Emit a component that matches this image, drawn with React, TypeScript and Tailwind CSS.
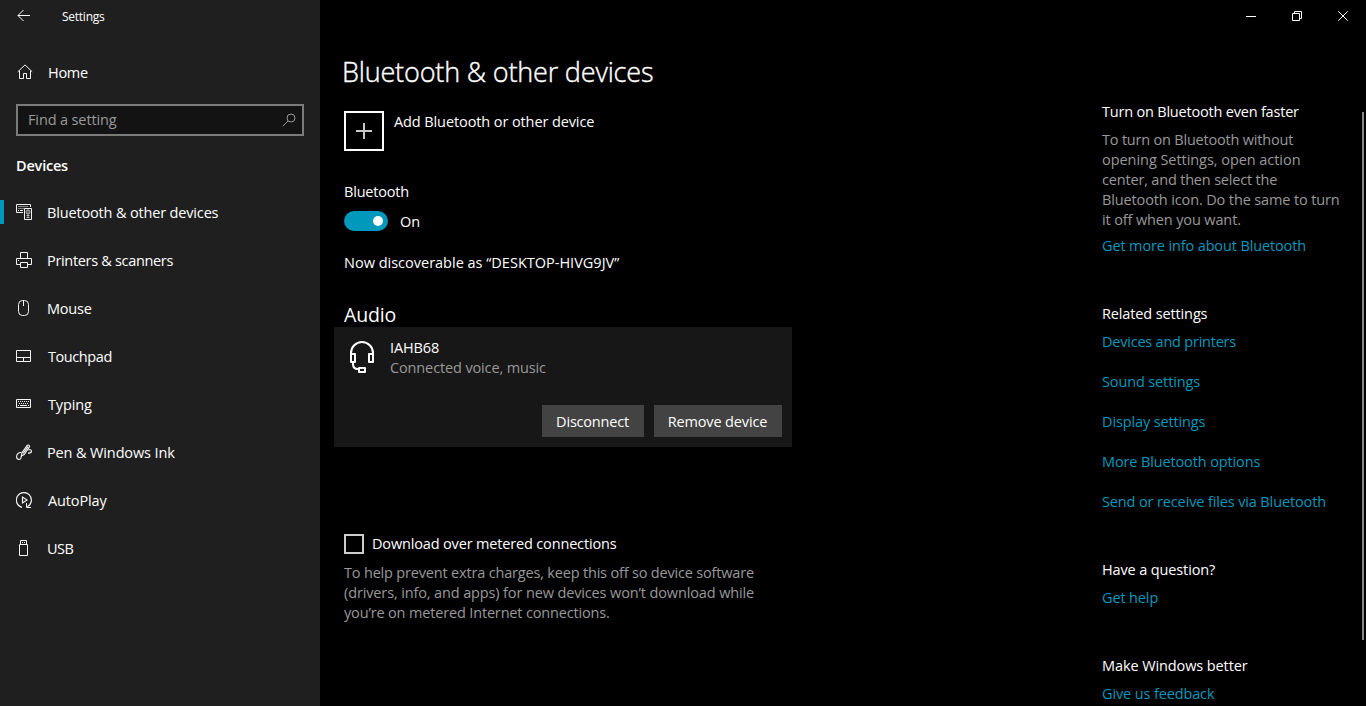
import type { ReactNode } from "react";

function Glyph({ children, className = "" }: { children: ReactNode; className?: string }) {
  return (
    <svg width="16" height="16" viewBox="0 0 16 16" fill="none" stroke="#f4f4f4" className={"shrink-0 " + className}>
      {children}
    </svg>
  );
}

const bluetoothIcon = (
  <Glyph>
    <path d="M7 8.5H.5v-8h14V3" />
    <path d="M2.5 2.5h10M2.5 4.5h5" strokeDasharray="1 1" />
    <path d="M2 6.5h1M4 6.5h3" />
    <path d="M8.5 4.5h7v11h-7z" />
    <circle cx="12" cy="8" r="2" stroke="#bdbdbd" />
    <path d="M12 5.5v8" stroke="#a0a0a0" />
    <path d="M10.5 11.5h3M10.5 13.5h3" stroke="#bdbdbd" />
  </Glyph>
);
const printerIcon = (
  <Glyph>
    <path d="M4.5 6V.5h7V6M4 12.5H.5v-6h15v6H12M4.5 10.5h7v5h-7zM2 8.5h1" />
  </Glyph>
);
const mouseIcon = (
  <Glyph>
    <rect x="2.5" y=".5" width="10" height="15" rx="4" />
    <path d="M7.5 1v5" />
  </Glyph>
);
const touchpadIcon = (
  <Glyph>
    <path d="M.5 2.5h14v11H.5zM.5 9.5h14M7.5 10v3" />
  </Glyph>
);
const typingIcon = (
  <Glyph>
    <path d="M.5 3.5h14v8H.5z" />
    <path d="M2 5.5h11M3 7.5h10" strokeDasharray="1 1" />
    <path d="M2 9.5h1M4 9.5h7M12 9.5h1" />
  </Glyph>
);
const penIcon = (
  <Glyph>
    <path d="M5.3 12 6 8.8 11 1.6C12 .3 14.2 1.3 13.4 3L8.2 10.6 5.3 12zM7.2 9.4l5-7" strokeWidth="1.1" />
    <path
      d="M5.5 8.3C2.5 8.6.6 10.6.6 12.8c0 1.6 1 2.6 2.2 2.6 1.9 0 2.500-1.600 2.600-3.700M12.300 5.900c2-.8 3.400.2 3.100 1.600-.3 1.200-1.600 1.600-3.400 1.600"
      strokeWidth="1.1"
    />
  </Glyph>
);
const autoplayIcon = (
  <Glyph>
    <path d="M6 15.3A7.5 7.5 0 1 1 11.3 14.7" strokeWidth="1.2" />
    <path d="M10.5 11v4.5H15" />
    <path d="M6.5 5v6l4.5-3z" strokeWidth="1.2" />
  </Glyph>
);
const usbIcon = (
  <Glyph>
    <path d="M3.5 4.5h8v11h-8zM4.5 4V.5h6V4M6 2.5h1M8 2.5h1" />
  </Glyph>
);

const nav = [
  { label: "Bluetooth & other devices", icon: bluetoothIcon, cls: "pl-[15px] tracking-[-0.16px]" },
  { label: "Printers & scanners", icon: printerIcon, cls: "pl-[15px] tracking-[-0.32px]" },
  { label: "Mouse", icon: mouseIcon, cls: "pl-[15px] tracking-[-0.2px]" },
  { label: "Touchpad", icon: touchpadIcon, cls: "pl-4 tracking-[-0.42px]" },
  { label: "Typing", icon: typingIcon, cls: "pl-4" },
  { label: "Pen & Windows Ink", icon: penIcon, cls: "pl-[15px] tracking-[-0.13px]" },
  { label: "AutoPlay", icon: autoplayIcon, cls: "pl-4" },
  { label: "USB", icon: usbIcon, cls: "pl-[15px] tracking-[-0.5px]" },
];

function Sidebar() {
  return (
    <aside className="flex w-[320px] shrink-0 flex-col bg-[#1f1f1f]">
      <div className="flex h-8 items-center pl-[17px]">
        <svg width="14" height="14" viewBox="0 0 14 14" fill="none" stroke="#fff">
          <path d="M1 6.5h12M6.5 1 1 6.5 6.5 12" />
        </svg>
        <span className="pt-[2px] pl-[31px] text-[12px] leading-4 tracking-[-0.25px]">Settings</span>
      </div>
      <div className="mt-4 flex h-12 items-center pl-[17px]">
        <Glyph>
          <path d="M.8 7.8 8 .9l7.2 6.9M2.5 6.5v8h4v-5h3v5h4v-8" />
        </Glyph>
        <span className="pt-[2px] pl-[15px] tracking-[-0.3px]">Home</span>
      </div>
      <div className="mx-4 mt-2 flex h-8 items-center justify-between border-2 border-[#7a7a7a] bg-[#131313] pr-[6px] pl-[10px] text-[#999]">
        <span>Find a setting</span>
        <svg width="14" height="14" viewBox="0 0 14 14" fill="none" stroke="#999">
          <circle cx="9" cy="5" r="4" />
          <path d="M6 8 .8 13.2" />
        </svg>
      </div>
      <h2 className="mt-5 pl-4 font-semibold tracking-[-0.2px]">Devices</h2>
      <nav className="mt-3 flex flex-col">
        {nav.map((n, i) => (
          <div key={n.label} className="flex h-12 items-center">
            <span className={i === 0 ? "h-6 w-1 bg-[#0099bc]" : "h-6 w-1"} />
            <span className="w-3" />
            {n.icon}
            <span className={"pt-[2px] " + n.cls}>{n.label}</span>
          </div>
        ))}
      </nav>
    </aside>
  );
}

function WindowButtons() {
  return (
    <div className="flex h-8 justify-end">
      {["M0 5.5h10", "M.5 2.5h7v7h-7zM2.5 2V.5h7v7H8", "M.3.3l9.4 9.4M9.7.3.3 9.7"].map((d) => (
        <div key={d} className="flex w-[46px] items-center justify-center">
          <svg width="10" height="10" viewBox="0 0 10 10" fill="none" stroke="#fff">
            <path d={d} />
          </svg>
        </div>
      ))}
    </div>
  );
}

function Devices() {
  return (
    <section className="flex w-[458px] flex-col">
      <h1 className="mt-[21px] pl-2 text-[27px] leading-[38px] font-light tracking-[-0.17px] [-webkit-text-stroke:0.4px_white]">
        Bluetooth &amp; other devices
      </h1>
      <div className="mt-5 flex pl-[10px]">
        <div className="flex size-10 items-center justify-center border-2 border-white">
          <svg width="16" height="16" viewBox="0 0 16 16" stroke="#c8c8c8" strokeWidth="2">
            <path d="M0 8h16M8 0v16" />
          </svg>
        </div>
        <span className="pt-px pl-[10px] tracking-[-0.1px]">Add Bluetooth or other device</span>
      </div>
      <div className="mt-[31px] pl-[10px] tracking-[-0.2px]">Bluetooth</div>
      <div className="mt-[9px] flex h-5 items-center pl-[10px]">
        <div className="flex h-5 w-11 items-center justify-end rounded-full bg-[#0099bc] pr-[5px]">
          <span className="size-[10px] rounded-full bg-white" />
        </div>
        <span className="pt-[2px] pl-3 tracking-normal">On</span>
      </div>
      <div className="mt-[22px] pl-[10px] tracking-normal">Now discoverable as “DESKTOP-HIVG9JV”</div>
      <h2 className="mt-[30px] pl-[10px] text-[19.5px] leading-6">Audio</h2>
      <div className="flex h-[120px] flex-col justify-between bg-[#171717] p-[10px]">
        <div className="flex">
          <svg
            width="24"
            height="32"
            viewBox="0 0 24 32"
            fill="none"
            stroke="#fff"
            strokeWidth="2"
            strokeLinejoin="round"
            className="mt-1 ml-[6px]"
          >
            <path d="M1 21V12a11 11 0 0 1 22 0v9M1 13h4v8H1zM19 13h4v8h-4zM3 21v2c0 3.5 2 5 5 5M9 27h6v4H9z" />
          </svg>
          <div className="flex flex-col pt-px pl-4">
            <span>IAHB68</span>
            <span className="text-[#999]">Connected voice, music</span>
          </div>
        </div>
        <div className="flex justify-end gap-[10px]">
          <button className="h-8 w-[102px] bg-[#434343] pt-[2px] pr-px tracking-[-0.2px]">Disconnect</button>
          <button className="h-8 w-32 bg-[#434343] pt-[2px] pr-px">Remove device</button>
        </div>
      </div>
      <div className="mt-[87px] flex items-center pl-[10px]">
        <span className="size-5 border-2 border-[#ccc]" />
        <span className="pl-2 tracking-[-0.16px]">Download over metered connections</span>
      </div>
      <p className="mt-[9px] pl-[10px] whitespace-nowrap text-[#999]">
        <span className="tracking-[-0.18px]">To help prevent extra charges, keep this off so device software</span>
        <br />
        <span className="tracking-[-0.13px]">(drivers, info, and apps) for new devices won’t download while</span>
        <br />
        <span className="tracking-[-0.16px]">you’re on metered Internet connections.</span>
      </p>
    </section>
  );
}

function Help() {
  return (
    <section className="mt-[70px] flex w-[260px] flex-col whitespace-nowrap">
      <div className="tracking-[-0.2px]">Turn on Bluetooth even faster</div>
      <p className="mt-2 text-[#999]">
        <span className="tracking-[-0.2px]">To turn on Bluetooth without</span>
        <br />
        <span className="tracking-[-0.05px]">opening Settings, open action</span>
        <br />
        <span className="tracking-[-0.18px]">center, and then select the</span>
        <br />
        Bluetooth icon. Do the same to turn
        <br />
        it off when you want.
      </p>
      <a className="mt-[6px] text-[#0099bc]">Get more info about Bluetooth</a>
      <div className="mt-12">Related settings</div>
      <div className="mt-2 flex flex-col gap-5 text-[#0099bc]">
        <a className="tracking-[-0.22px]">Devices and printers</a>
        <a>Sound settings</a>
        <a>Display settings</a>
        <a>More Bluetooth options</a>
        <a>Send or receive files via Bluetooth</a>
      </div>
      <div className="mt-12">Have a question?</div>
      <a className="mt-2 text-[#0099bc]">Get help</a>
      <div className="mt-12 tracking-[-0.1px]">Make Windows better</div>
      <a className="mt-2 text-[#0099bc]">Give us feedback</a>
    </section>
  );
}

export default function App() {
  return (
    <div className="flex h-[706px] w-[1366px] overflow-hidden bg-black font-['Open_Sans',sans-serif] text-[14.5px] leading-5 tracking-[-0.13px] text-white">
      <Sidebar />
      <main className="flex flex-1 flex-col">
        <WindowButtons />
        <div className="flex flex-1 pl-[14px]">
          <Devices />
          <div className="flex flex-1 justify-end">
            <Help />
            <div className="mt-20 mr-[2px] h-[528px] w-[2px] bg-[#858585]" />
          </div>
        </div>
      </main>
    </div>
  );
}
